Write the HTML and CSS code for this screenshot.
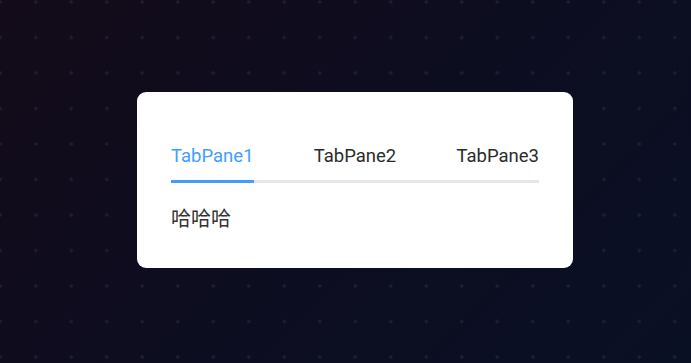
FILE: index.html
```html
<!DOCTYPE html>
<html lang="zh">
<head>
  <meta charset="UTF-8">
  <title>Tabs</title>
  <link rel="stylesheet" href="styles.css">
</head>
<body>

<div class="stage">
  <div class="card">
    <div class="tabs-nav">
      <div class="tab active">TabPane1</div>
      <div class="tab">TabPane2</div>
      <div class="tab">TabPane3</div>
    </div>
    <div class="tab-content">哈哈哈</div>
  </div>
</div>

</body>
</html>
```

FILE: styles.css
```css
html, body {
  margin: 0;
  height: 100%;
}

body {
  font-family: Roboto, "Noto Sans CJK SC", sans-serif;
  background-color: #0e0d1f;
  background-image:
    radial-gradient(circle, rgba(60, 60, 100, 0.35) 1.4px, transparent 2px),
    linear-gradient(135deg, #130b19 0%, #0d0d20 50%, #0a1024 100%);
  background-size: 35.5px 35.5px, 100% 100%;
  background-position: 18px -15.75px, 0 0;
}

.stage {
  height: 100%;
  display: flex;
  align-items: flex-start;
}

.card {
  margin: 92px 0 0 137px;
  width: 368px;
  padding: 51px 34px 35px;
  background: #fff;
  border-radius: 9px;
}

.tabs-nav {
  display: flex;
  justify-content: space-between;
  border-bottom: 3px solid #e4e7ed;
}

.tab {
  font-size: 18.5px;
  line-height: 26px;
  padding-bottom: 11px;
  margin-bottom: -3px;
  border-bottom: 3px solid transparent;
  color: #2b2b2b;
  cursor: pointer;
}

.tab.active {
  color: #409eff;
  border-bottom-color: #409eff;
}

.tab-content {
  margin-top: 20px;
  font-family: "Noto Sans CJK SC", sans-serif;
  font-size: 20px;
  line-height: 30px;
  color: #333;
}
```
